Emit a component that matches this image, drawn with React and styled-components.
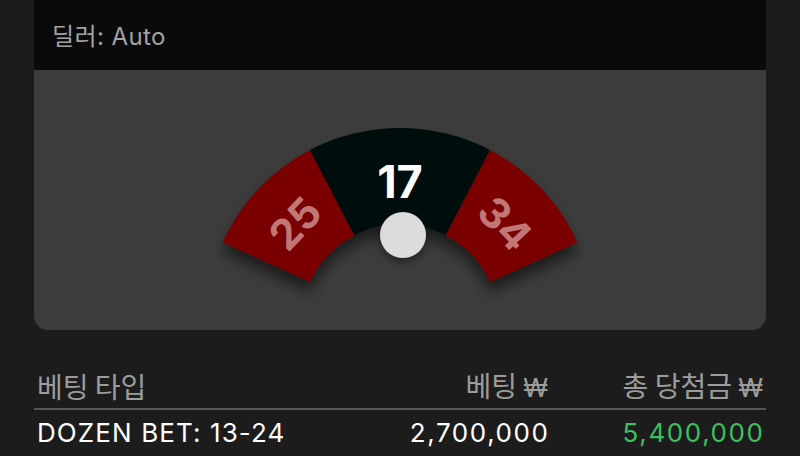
import React from "react";
import styled, { createGlobalStyle } from "styled-components";

const Global = createGlobalStyle`
  html, body { margin: 0; padding: 0; background: #1c1c1c; }
  body { width: 800px; height: 456px; overflow: hidden; font-family: Inter, "Noto Sans", "Noto Sans CJK KR", sans-serif; }
`;

const Page = styled.div`
  padding: 0 34px;
  display: flex;
  flex-direction: column;
`;

const Panel = styled.section`
  display: flex;
  flex-direction: column;
`;

const PanelHeader = styled.header`
  height: 70px;
  background: #0a0a0a;
  display: flex;
  align-items: center;
  padding-left: 18px;
  padding-bottom: 2px;
  box-sizing: border-box;
  color: #a3a3a3;
  font-size: 24px;
  font-family: Inter, "Noto Sans CJK KR", sans-serif;
  letter-spacing: 0.4px;
`;

const Stage = styled.div`
  height: 260px;
  background: #3c3c3c;
  border-radius: 0 0 14px 14px;
  display: flex;
  overflow: hidden;
`;

const Table = styled.div`
  margin-top: 34px;
  display: flex;
  flex-direction: column;
`;

const Row = styled.div`
  display: grid;
  grid-template-columns: 1fr 220px 215px;
  padding: 0 3px;
  align-items: center;
  height: ${(p) => p.$h}px;
  border-bottom: ${(p) => (p.$line ? "2px solid #565656" : "none")};
`;

const HeadCell = styled.div`
  color: #9c9c9c;
  font-size: 28px;
  font-family: "Noto Sans CJK KR", sans-serif;
  text-align: ${(p) => (p.$right ? "right" : "left")};
  line-height: 1;
`;

const Won = styled.span`
  font-family: Inter, "Noto Sans", sans-serif;
  font-size: 26px;
`;

const Cell = styled.div`
  color: ${(p) => p.$color || "#ffffff"};
  font-size: 26px;
  font-family: Inter, "Noto Sans", sans-serif;
  font-weight: 400;
  letter-spacing: ${(p) => (p.$right ? 1.6 : 1.1)}px;
  margin-right: ${(p) => (p.$right ? -1.6 : 0)}px;
  text-align: ${(p) => (p.$right ? "right" : "left")};
`;

const CX = 400;
const CY = 323;
const RO = 195;
const RI = 99;

function pt(deg, r) {
  const a = (deg * Math.PI) / 180;
  return [CX + r * Math.sin(a), CY - r * Math.cos(a)];
}

function sector(a0, a1) {
  const [x0, y0] = pt(a0, RO);
  const [x1, y1] = pt(a1, RO);
  const [x2, y2] = pt(a1, RI);
  const [x3, y3] = pt(a0, RI);
  return `M${x0} ${y0} A${RO} ${RO} 0 0 1 ${x1} ${y1} L${x2} ${y2} A${RI} ${RI} 0 0 0 ${x3} ${y3} Z`;
}

const segments = [
  { a0: -65.5, a1: -27.5, fill: "#7a0303", label: "25", mid: -46.5, color: "#c27676", size: 42 },
  { a0: -27.5, a1: 27.5, fill: "#031010", label: "17", mid: 0, color: "#ffffff", size: 45 },
  { a0: 27.5, a1: 65.5, fill: "#7a0303", label: "34", mid: 46.5, color: "#c27676", size: 42 },
];

function Wheel() {
  return (
    <svg width="732" height="260" viewBox="34 70 732 260">
      <defs>
        <filter id="sh" x="-20%" y="-20%" width="140%" height="160%">
          <feDropShadow dx="0" dy="10" stdDeviation="7" floodColor="#000" floodOpacity="0.55" />
        </filter>
        <filter id="bs" x="-50%" y="-50%" width="200%" height="200%">
          <feDropShadow dx="0" dy="4" stdDeviation="4" floodColor="#000" floodOpacity="0.45" />
        </filter>
      </defs>
      <g filter="url(#sh)">
        {segments.map((s) => (
          <path key={s.label} d={sector(s.a0, s.a1)} fill={s.fill} />
        ))}
      </g>
      {segments.map((s) => {
        const [x, y] = pt(s.mid, s.mid === 0 ? 142 : 145);
        return (
          <text
            key={"t" + s.label}
            x={x}
            y={y}
            transform={`rotate(${s.mid} ${x} ${y})`}
            textAnchor="middle"
            dominantBaseline="central"
            fill={s.color}
            fontSize={s.size}
            fontWeight="700"
            fontFamily="Inter, 'Noto Sans', sans-serif"
          >
            {s.label}
          </text>
        );
      })}
      <circle cx="403" cy="235" r="23" fill="#dcdcdc" filter="url(#bs)" />
    </svg>
  );
}

export default function App() {
  return (
    <>
      <Global />
      <Page>
        <Panel>
          <PanelHeader>딜러: Auto</PanelHeader>
          <Stage>
            <Wheel />
          </Stage>
        </Panel>
        <Table>
          <Row $h={44} $line>
            <HeadCell>베팅 타입</HeadCell>
            <HeadCell $right>
              베팅 <Won>₩</Won>
            </HeadCell>
            <HeadCell $right>
              총 당첨금 <Won>₩</Won>
            </HeadCell>
          </Row>
          <Row $h={44}>
            <Cell>DOZEN BET: 13-24</Cell>
            <Cell $right>2,700,000</Cell>
            <Cell $right $color="#3dc060">5,400,000</Cell>
          </Row>
        </Table>
      </Page>
    </>
  );
}
